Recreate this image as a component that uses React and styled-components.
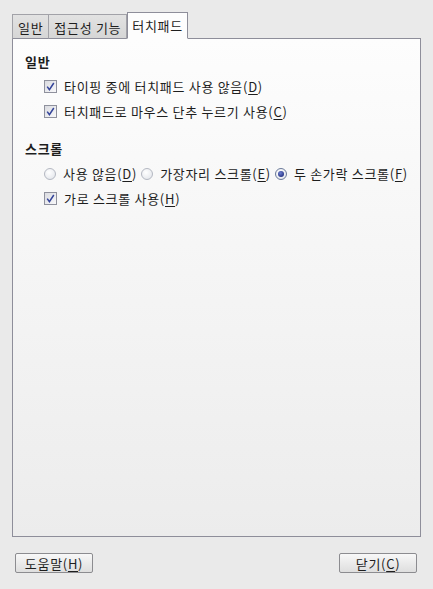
import React from 'react';
import styled, { createGlobalStyle } from 'styled-components';

const GlobalStyle = createGlobalStyle`
  html, body {
    margin: 0;
    padding: 0;
    background: #eaeaea;
  }
  body {
    font-family: "Noto Sans CJK KR", "Liberation Sans", sans-serif;
    font-size: 13px;
    letter-spacing: 0.7px;
    color: #1e1e1e;
  }
`;

const Window = styled.div`
  width: 433px;
  height: 589px;
  box-sizing: border-box;
  padding: 12px 12px 0 12px;
  display: flex;
  flex-direction: column;
`;

const TabBar = styled.div`
  display: flex;
  align-items: flex-end;
  height: 27px;
  margin-bottom: -1px;
  position: relative;
  z-index: 1;
`;

const Tab = styled.div`
  box-sizing: border-box;
  height: ${p => (p.$active ? '27px' : '25px')};
  padding: 0 ${p => (p.$active ? '4px' : '5px')};
  display: flex;
  align-items: center;
  border: 1px solid ${p => (p.$active ? '#8e8e9a' : '#a2a2a8')};
  border-bottom-color: ${p => (p.$active ? '#fdfdfd' : '#8e8e9a')};
  border-left-width: ${p => (p.$first || p.$active ? '1px' : '0')};
  background: ${p => (p.$active ? '#fdfdfd' : 'linear-gradient(#e2e2e2, #d6d6d6)')};
  line-height: 1;
  white-space: nowrap;
  padding-top: ${p => (p.$active ? '0' : '1px')};
`;

const Panel = styled.div`
  box-sizing: border-box;
  height: 499px;
  border: 1px solid #8e8e9a;
  background: linear-gradient(#fdfdfd, #ececec);
  padding: 14px 12px;
`;

const Section = styled.div`
  display: flex;
  flex-direction: column;
  margin-bottom: 16px;
`;

const Heading = styled.div`
  font-weight: bold;
  height: 21px;
  line-height: 18px;
`;

const Row = styled.div`
  display: flex;
  align-items: center;
  height: 25px;
  padding-left: 19px;
  white-space: nowrap;
`;

const Label = styled.span`
  margin-left: 7px;
  margin-right: 4px;
  line-height: 1;
`;

const Key = styled.span`
  text-decoration: underline;
  text-underline-offset: 2px;
`;

const CheckBox = styled.span`
  box-sizing: border-box;
  width: 13px;
  height: 13px;
  flex: none;
  border: 1px solid #8f919d;
  background: linear-gradient(135deg, #dadbe0, #f8f8fa);
  display: flex;
  align-items: center;
  justify-content: center;
`;

const Radio = styled.span`
  box-sizing: border-box;
  width: 12px;
  height: 12px;
  flex: none;
  border-radius: 50%;
  border: 1px solid ${p => (p.$on ? '#6b7a9a' : '#b4b8c2')};
  background: radial-gradient(circle at 40% 35%, #ffffff, #dfe2e8);
  display: flex;
  align-items: center;
  justify-content: center;
`;

const Dot = styled.span`
  width: 6px;
  height: 6px;
  border-radius: 50%;
  background: radial-gradient(circle at 40% 35%, #6d7fd0, #101a6a);
`;

const Footer = styled.div`
  display: flex;
  justify-content: space-between;
  padding: 16px 4px 0 3px;
`;

const Button = styled.button`
  box-sizing: border-box;
  width: 78px;
  height: 20px;
  border: 1px solid #8c8c90;
  border-radius: 2px;
  background: linear-gradient(#f8f8f8, #dedede);
  font-family: inherit;
  font-size: 13px;
  letter-spacing: inherit;
  color: #1e1e1e;
  padding: 0;
  line-height: 1;
`;

const Check = () => (
  <CheckBox>
    <svg width="11" height="11" viewBox="0 0 11 11">
      <path d="M2.2 5.6 L4.4 8.6 L8.8 2" fill="none" stroke="#34449a" strokeWidth="1.5" />
    </svg>
  </CheckBox>
);

const CheckRow = ({ text, k }) => (
  <Row>
    <Check />
    <Label>
      {text}(<Key>{k}</Key>)
    </Label>
  </Row>
);

const App = () => (
  <>
    <GlobalStyle />
    <Window>
      <TabBar>
        <Tab $first>일반</Tab>
        <Tab>접근성 기능</Tab>
        <Tab $active>터치패드</Tab>
      </TabBar>
      <Panel>
        <Section>
          <Heading>일반</Heading>
          <CheckRow text="타이핑 중에 터치패드 사용 않음" k="D" />
          <CheckRow text="터치패드로 마우스 단추 누르기 사용" k="C" />
        </Section>
        <Section>
          <Heading>스크롤</Heading>
          <Row>
            <Radio />
            <Label>
              사용 않음(<Key>D</Key>)
            </Label>
            <Radio />
            <Label>
              가장자리 스크롤(<Key>E</Key>)
            </Label>
            <Radio $on>
              <Dot />
            </Radio>
            <Label>
              두 손가락 스크롤(<Key>F</Key>)
            </Label>
          </Row>
          <CheckRow text="가로 스크롤 사용" k="H" />
        </Section>
      </Panel>
      <Footer>
        <Button>
          도움말(<Key>H</Key>)
        </Button>
        <Button>
          닫기(<Key>C</Key>)
        </Button>
      </Footer>
    </Window>
  </>
);

export default App;
